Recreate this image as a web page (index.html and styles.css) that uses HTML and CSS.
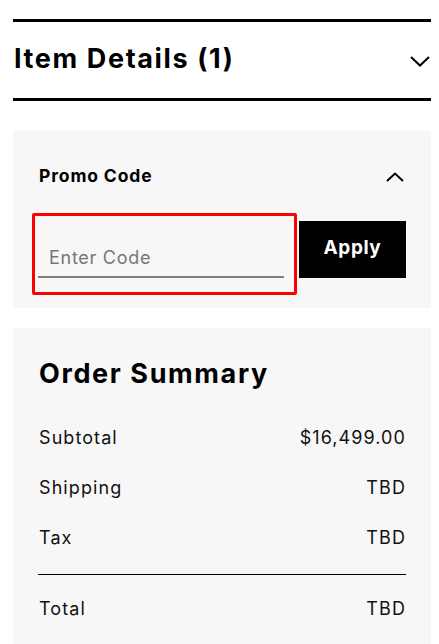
FILE: index.html
```html
<!DOCTYPE html>
<html lang="en">
<head>
<meta charset="utf-8">
<title>Checkout</title>
<link rel="stylesheet" href="styles.css">
</head>
<body>
<div class="page">
  <section class="items">
    <h2 class="items-title">Item Details (1)</h2>
    <svg class="chev-down" width="20" height="11" viewBox="0 0 20 11"><polyline points="1,1 10,9.5 19,1" fill="none" stroke="#000" stroke-width="2"/></svg>
  </section>

  <section class="promo">
    <div class="promo-head">
      <h3 class="promo-title">Promo Code</h3>
      <svg class="chev-up" width="18" height="10" viewBox="0 0 18 10"><polyline points="1,9 9,1.5 17,9" fill="none" stroke="#000" stroke-width="2"/></svg>
    </div>
    <div class="promo-row">
      <div class="highlight">
        <input class="code-input" type="text" placeholder="Enter Code">
      </div>
      <button class="apply">Apply</button>
    </div>
  </section>

  <section class="summary">
    <h2 class="summary-title">Order Summary</h2>
    <div class="line"><span>Subtotal</span><span>$16,499.00</span></div>
    <div class="line"><span>Shipping</span><span>TBD</span></div>
    <div class="line"><span>Tax</span><span>TBD</span></div>
    <div class="divider"></div>
    <div class="line total"><span>Total</span><span>TBD</span></div>
  </section>
</div>
</body>
</html>
```

FILE: styles.css
```css
* { box-sizing: border-box; }
html, body { margin: 0; padding: 0; background: #fff; }
body { font-family: Inter, "Noto Sans", Arial, sans-serif; color: #000; }
.page { padding: 19px 8px 0 13px; }

.items {
  border-top: 3px solid #000;
  border-bottom: 3px solid #000;
  height: 82px;
  display: flex;
  align-items: center;
  justify-content: space-between;
}
.items-title {
  margin: 0;
  font-size: 27px;
  font-weight: 700;
  letter-spacing: 0.06em;
  line-height: 1;
  padding-left: 1px;
  padding-bottom: 4px;
}
.chev-down { margin-right: 1px; margin-top: 2px; }

.promo {
  margin-top: 30px;
  background: #f7f7f7;
  height: 177px;
  padding: 26px 25px 0 26px;
}
.promo-head {
  height: 36px;
  display: flex;
  align-items: center;
  justify-content: space-between;
}
.promo-title {
  margin: 0;
  font-size: 17.5px;
  font-weight: 700;
  letter-spacing: 0.05em;
}
.chev-up { margin-right: 2px; margin-top: 3px; }
.promo-row {
  margin-top: 20px;
  margin-left: -7px;
  display: flex;
  align-items: flex-start;
}
.highlight {
  border: 3px solid #ff0000;
  border-radius: 2px;
  padding: 5px 10px 14px 3px;
}
.code-input {
  display: block;
  width: 246px;
  height: 57px;
  border: 0;
  border-bottom: 2px solid #808080;
  background: transparent;
  padding: 18px 0 0 11px;
  font-family: inherit;
  font-size: 18px;
  letter-spacing: 0.04em;
  color: #000;
  outline: none;
}
.code-input::placeholder { color: #767676; }
.apply {
  margin: 8px 0 0 2px;
  width: 107px;
  height: 57px;
  background: #000;
  color: #fff;
  border: 0;
  font-family: inherit;
  font-size: 19px;
  font-weight: 700;
  letter-spacing: 0.03em;
  padding: 0 0 4px 0;
}

.summary {
  margin-top: 20px;
  background: #f7f7f7;
  padding: 24px 25px 20px 26px;
}
.summary-title {
  margin: 0;
  font-size: 27px;
  font-weight: 700;
  letter-spacing: 0.06em;
  line-height: 40px;
  padding-top: 2px;
  margin-bottom: 18px;
}
.line {
  height: 50px;
  display: flex;
  align-items: center;
  justify-content: space-between;
  font-size: 18px;
  letter-spacing: 0.06em;
  color: #111;
}
.divider {
  height: 1px;
  background: #000;
  margin: 12px 0 0 -1px;
}
.total { margin-top: 8px; }
```
